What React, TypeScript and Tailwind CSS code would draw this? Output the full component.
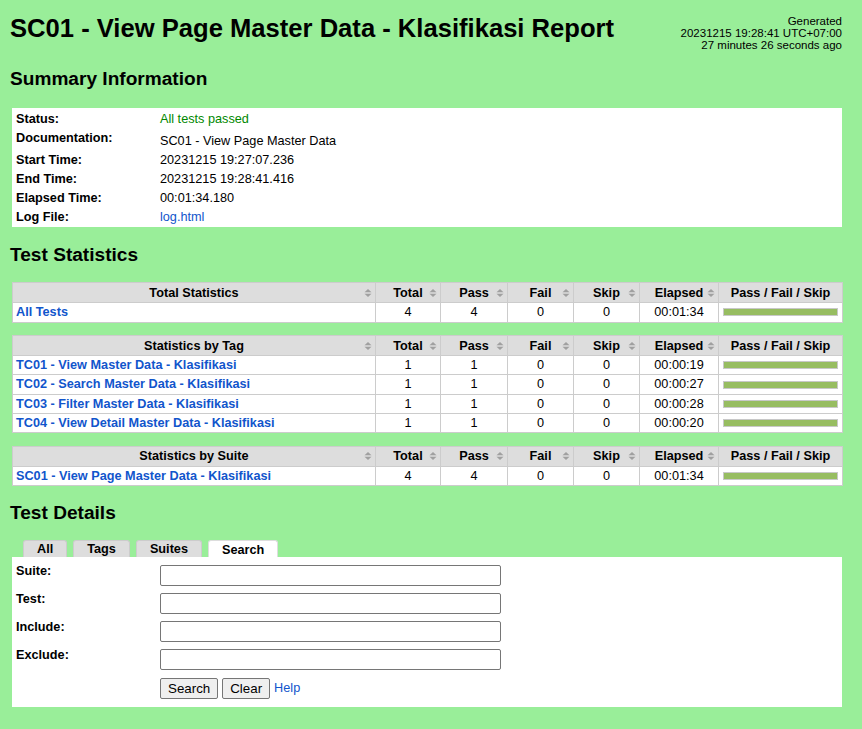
import React from 'react';

type StatRow = {
  name: string;
  total: number;
  pass: number;
  fail: number;
  skip: number;
  elapsed: string;
};

const totalStats: StatRow[] = [
  { name: 'All Tests', total: 4, pass: 4, fail: 0, skip: 0, elapsed: '00:01:34' },
];

const tagStats: StatRow[] = [
  { name: 'TC01 - View Master Data - Klasifikasi', total: 1, pass: 1, fail: 0, skip: 0, elapsed: '00:00:19' },
  { name: 'TC02 - Search Master Data - Klasifikasi', total: 1, pass: 1, fail: 0, skip: 0, elapsed: '00:00:27' },
  { name: 'TC03 - Filter Master Data - Klasifikasi', total: 1, pass: 1, fail: 0, skip: 0, elapsed: '00:00:28' },
  { name: 'TC04 - View Detail Master Data - Klasifikasi', total: 1, pass: 1, fail: 0, skip: 0, elapsed: '00:00:20' },
];

const suiteStats: StatRow[] = [
  { name: 'SC01 - View Page Master Data - Klasifikasi', total: 4, pass: 4, fail: 0, skip: 0, elapsed: '00:01:34' },
];

const summary = [
  { label: 'Status:', value: 'All tests passed', kind: 'pass' },
  { label: 'Documentation:', value: 'SC01 - View Page Master Data', kind: 'doc' },
  { label: 'Start Time:', value: '20231215 19:27:07.236', kind: 'text' },
  { label: 'End Time:', value: '20231215 19:28:41.416', kind: 'text' },
  { label: 'Elapsed Time:', value: '00:01:34.180', kind: 'text' },
  { label: 'Log File:', value: 'log.html', kind: 'link' },
];

const SortIcon = () => (
  <svg
    width="8"
    height="8"
    viewBox="0 0 8 8"
    className="absolute right-[3px] top-1/2 -translate-y-1/2"
  >
    <polygon points="4,0 7.5,3.2 0.5,3.2" fill="#a0a0a0" />
    <polygon points="0.5,4.8 7.5,4.8 4,8" fill="#a0a0a0" />
  </svg>
);

const StatTable: React.FC<{ title: string; rows: StatRow[] }> = ({ title, rows }) => {
  const th = 'relative border border-[#ccc] bg-[#ddd] py-[1.5px] px-[4px] leading-[16px] font-bold text-center';
  const td = 'border border-[#ccc] py-[1px] px-[4px] leading-[16.3px] text-center';
  return (
    <table className="ml-[2px] w-[830px] table-fixed border-collapse bg-white text-[12.7px]">
      <colgroup>
        <col className="w-[363px]" />
        <col className="w-[65px]" />
        <col className="w-[67px]" />
        <col className="w-[66px]" />
        <col className="w-[66px]" />
        <col className="w-[79px]" />
        <col className="w-[124px]" />
      </colgroup>
      <thead>
        <tr>
          <th className={th}>
            {title}
            <SortIcon />
          </th>
          <th className={th}>
            Total
            <SortIcon />
          </th>
          <th className={th}>
            Pass
            <SortIcon />
          </th>
          <th className={th}>
            Fail
            <SortIcon />
          </th>
          <th className={th}>
            Skip
            <SortIcon />
          </th>
          <th className={th}>
            Elapsed
            <SortIcon />
          </th>
          <th className={th}>Pass / Fail / Skip</th>
        </tr>
      </thead>
      <tbody>
        {rows.map((r) => (
          <tr key={r.name}>
            <td className="border border-[#ccc] py-[1px] px-[3px] leading-[16.3px] text-left font-bold text-[#15c] whitespace-nowrap">
              {r.name}
            </td>
            <td className={td}>{r.total}</td>
            <td className={td}>{r.pass}</td>
            <td className={td}>{r.fail}</td>
            <td className={td}>{r.skip}</td>
            <td className={td}>{r.elapsed}</td>
            <td className="border border-[#ccc] py-[1px] px-[4px]">
              <div className="h-[8px] w-full border border-[#c8c8c8] bg-[#97bd61]" />
            </td>
          </tr>
        ))}
      </tbody>
    </table>
  );
};

export default function App() {
  return (
    <div className="min-h-screen bg-[#99ee99] font-['Liberation_Sans',Arial,sans-serif] text-black">
      <div className="w-[842px] pl-[10px] pb-[22px]">
        {/* Header */}
        <div className="flex h-[44px] items-start justify-between">
          <h1 className="mt-[13px] text-[25.6px] font-bold leading-[31px]">
            SC01 - View Page Master Data - Klasifikasi Report
          </h1>
          <div className="mt-[15px] text-right text-[11.5px] leading-[12px]">
            <div>Generated</div>
            <div>20231215 19:28:41 UTC+07:00</div>
            <div>27 minutes 26 seconds ago</div>
          </div>
        </div>

        {/* Summary */}
        <h2 className="mt-[22.5px] text-[19.1px] font-bold leading-[23.4px]">Summary Information</h2>
        <div className="ml-[2px] mt-[18.5px] w-[830px] bg-white pl-[4px] pt-[1.5px] pb-[0.5px] text-[12.7px]">
          {summary.map((s) => (
            <div
              key={s.label}
              className={`flex ${s.kind === 'doc' ? 'h-[22px]' : 'h-[19px]'} leading-[19px]`}
            >
              <div className="w-[144px] font-bold">{s.label}</div>
              {s.kind === 'pass' && <div className="text-[#080]">{s.value}</div>}
              {s.kind === 'doc' && <div className="pt-[3px]">{s.value}</div>}
              {s.kind === 'text' && <div>{s.value}</div>}
              {s.kind === 'link' && <div className="text-[#15c]">{s.value}</div>}
            </div>
          ))}
        </div>

        {/* Statistics */}
        <h2 className="mt-[15.5px] text-[19.1px] font-bold leading-[23.4px]">Test Statistics</h2>
        <div className="mt-[16px] flex flex-col gap-[12.5px]">
          <StatTable title="Total Statistics" rows={totalStats} />
          <StatTable title="Statistics by Tag" rows={tagStats} />
          <StatTable title="Statistics by Suite" rows={suiteStats} />
        </div>

        {/* Details */}
        <h2 className="mt-[15px] text-[19.1px] font-bold leading-[23.4px]">Test Details</h2>
        <div className="ml-[2px] mt-[15.5px] w-[830px] text-[12.7px]">
          <div className="flex items-end gap-[6px] pl-[11px]">
            {['All', 'Tags', 'Suites'].map((t) => (
              <div
                key={t}
                className="h-[17px] rounded-t-[3px] border border-b-0 border-[#ccc] bg-[#ddd] px-[13px] font-bold leading-[16px]"
              >
                {t}
              </div>
            ))}
            <div className="h-[17px] rounded-t-[3px] border border-b-0 border-[#ddd] bg-white px-[13px] pt-[1px] font-bold leading-[16px]">
              Search
            </div>
          </div>
          <div className="bg-white pl-[4px] pb-[8px]">
            {['Suite:', 'Test:', 'Include:', 'Exclude:'].map((l) => (
              <div key={l} className="flex h-[28px]">
                <div className="w-[144px] pt-[6px] font-bold leading-[16px]">{l}</div>
                <input
                  type="text"
                  className="mt-[8px] h-[21px] w-[341px] rounded-[2px] border border-[#767676] bg-white"
                />
              </div>
            ))}
            <div className="flex items-center gap-[4px] pl-[144px] pt-[9px]">
              <button className="h-[21px] rounded-[2px] border border-[#767676] bg-[#efefef] px-[7px] text-[13.33px] leading-[15px]">
                Search
              </button>
              <button className="h-[21px] rounded-[2px] border border-[#767676] bg-[#efefef] px-[7px] text-[13.33px] leading-[15px]">
                Clear
              </button>
              <span className="text-[#15c]">Help</span>
            </div>
          </div>
        </div>
      </div>
    </div>
  );
}
